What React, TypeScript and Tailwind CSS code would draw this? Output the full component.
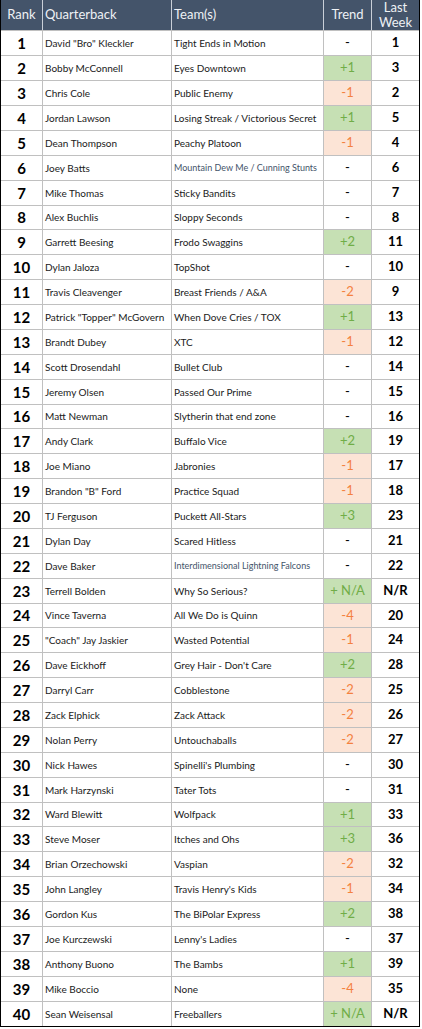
import React from "react";

type Row = {
  qb: string;
  team: string;
  trend: string;
  last: string;
  small?: boolean;
};

const ROWS: Row[] = [
  { qb: 'David "Bro" Kleckler', team: "Tight Ends in Motion", trend: "-", last: "1" },
  { qb: "Bobby McConnell", team: "Eyes Downtown", trend: "+1", last: "3" },
  { qb: "Chris Cole", team: "Public Enemy", trend: "-1", last: "2" },
  { qb: "Jordan Lawson", team: "Losing Streak / Victorious Secret", trend: "+1", last: "5" },
  { qb: "Dean Thompson", team: "Peachy Platoon", trend: "-1", last: "4" },
  { qb: "Joey Batts", team: "Mountain Dew Me / Cunning Stunts", trend: "-", last: "6", small: true },
  { qb: "Mike Thomas", team: "Sticky Bandits", trend: "-", last: "7" },
  { qb: "Alex Buchlis", team: "Sloppy Seconds", trend: "-", last: "8" },
  { qb: "Garrett Beesing", team: "Frodo Swaggins", trend: "+2", last: "11" },
  { qb: "Dylan Jaloza", team: "TopShot", trend: "-", last: "10" },
  { qb: "Travis Cleavenger", team: "Breast Friends / A&A", trend: "-2", last: "9" },
  { qb: 'Patrick "Topper" McGovern', team: "When Dove Cries / TOX", trend: "+1", last: "13" },
  { qb: "Brandt Dubey", team: "XTC", trend: "-1", last: "12" },
  { qb: "Scott Drosendahl", team: "Bullet Club", trend: "-", last: "14" },
  { qb: "Jeremy Olsen", team: "Passed Our Prime", trend: "-", last: "15" },
  { qb: "Matt Newman", team: "Slytherin that end zone", trend: "-", last: "16" },
  { qb: "Andy Clark", team: "Buffalo Vice", trend: "+2", last: "19" },
  { qb: "Joe Miano", team: "Jabronies", trend: "-1", last: "17" },
  { qb: 'Brandon "B" Ford', team: "Practice Squad", trend: "-1", last: "18" },
  { qb: "TJ Ferguson", team: "Puckett All-Stars", trend: "+3", last: "23" },
  { qb: "Dylan Day", team: "Scared Hitless", trend: "-", last: "21" },
  { qb: "Dave Baker", team: "Interdimensional Lightning Falcons", trend: "-", last: "22", small: true },
  { qb: "Terrell Bolden", team: "Why So Serious?", trend: "+ N/A", last: "N/R" },
  { qb: "Vince Taverna", team: "All We Do is Quinn", trend: "-4", last: "20" },
  { qb: '"Coach" Jay Jaskier', team: "Wasted Potential", trend: "-1", last: "24" },
  { qb: "Dave Eickhoff", team: "Grey Hair - Don't Care", trend: "+2", last: "28" },
  { qb: "Darryl Carr", team: "Cobblestone", trend: "-2", last: "25" },
  { qb: "Zack Elphick", team: "Zack Attack", trend: "-2", last: "26" },
  { qb: "Nolan Perry", team: "Untouchaballs", trend: "-2", last: "27" },
  { qb: "Nick Hawes", team: "Spinelli's Plumbing", trend: "-", last: "30" },
  { qb: "Mark Harzynski", team: "Tater Tots", trend: "-", last: "31" },
  { qb: "Ward Blewitt", team: "Wolfpack", trend: "+1", last: "33" },
  { qb: "Steve Moser", team: "Itches and Ohs", trend: "+3", last: "36" },
  { qb: "Brian Orzechowski", team: "Vaspian", trend: "-2", last: "32" },
  { qb: "John Langley", team: "Travis Henry's Kids", trend: "-1", last: "34" },
  { qb: "Gordon Kus", team: "The BiPolar Express", trend: "+2", last: "38" },
  { qb: "Joe Kurczewski", team: "Lenny's Ladies", trend: "-", last: "37" },
  { qb: "Anthony Buono", team: "The Bambs", trend: "+1", last: "39" },
  { qb: "Mike Boccio", team: "None", trend: "-4", last: "35" },
  { qb: "Sean Weisensal", team: "Freeballers", trend: "+ N/A", last: "N/R" },
];

const COLS = "grid grid-cols-[42px_129px_152px_48px_47px]";

function trendClass(t: string) {
  if (t.startsWith("+")) return "bg-[#c6e0b4] text-[#70ad47]";
  if (t === "-") return "bg-white text-black";
  return "bg-[#fce4d6] text-[#f4813f]";
}

function RankRow({ row, index }: { row: Row; index: number }) {
  const last = index === ROWS.length - 1;
  const height = index % 8 === 7 ? "h-[24px]" : "h-[25px]";
  return (
    <div className={`${COLS} ${height} ${last ? "" : "border-b border-[#c0c0c0]"}`}>
      <div className="flex items-center justify-center border-r border-[#c0c0c0] text-[15px] font-bold text-black">
        {index + 1}
      </div>
      <div className="flex items-center border-r border-[#c0c0c0] pl-[2px] text-[10px] text-[#1a1a1a] whitespace-nowrap overflow-hidden">
        {row.qb}
      </div>
      {row.small ? (
        <div className="flex items-center border-r border-[#c0c0c0] pl-[2px] text-[9px] text-[#44546a] whitespace-nowrap overflow-hidden">
          {row.team}
        </div>
      ) : (
        <div className="flex items-center border-r border-[#c0c0c0] pl-[2px] text-[10px] text-[#1a1a1a] whitespace-nowrap overflow-hidden">
          {row.team}
        </div>
      )}
      <div
        className={`flex items-center justify-center border-r border-[#c0c0c0] text-[13px] ${trendClass(row.trend)}`}
      >
        {row.trend}
      </div>
      <div className="flex items-center justify-center text-[13px] font-bold text-black">{row.last}</div>
    </div>
  );
}

export default function App() {
  return (
    <div className="min-h-[1029px] bg-white font-['Lato','Open_Sans',sans-serif]">
      <div className="w-[420px] border-x border-b border-black">
        <div className={`${COLS} h-[31px] bg-[#44546a] text-[#eef1f5] border-b border-[#c0c0c0]`}>
          <div className="flex items-center justify-center border-r border-[#c9cfd8] text-[13px]">Rank</div>
          <div className="flex items-center border-r border-[#c9cfd8] pl-[2px] text-[13px]">Quarterback</div>
          <div className="flex items-center border-r border-[#c9cfd8] pl-[2px] text-[13px]">Team(s)</div>
          <div className="flex items-center justify-center border-r border-[#c9cfd8] text-[13px]">Trend</div>
          <div className="flex flex-col items-center justify-center text-[13px] leading-[15px]">
            <span>Last</span>
            <span>Week</span>
          </div>
        </div>
        {ROWS.map((row, i) => (
          <RankRow key={row.qb} row={row} index={i} />
        ))}
      </div>
    </div>
  );
}
